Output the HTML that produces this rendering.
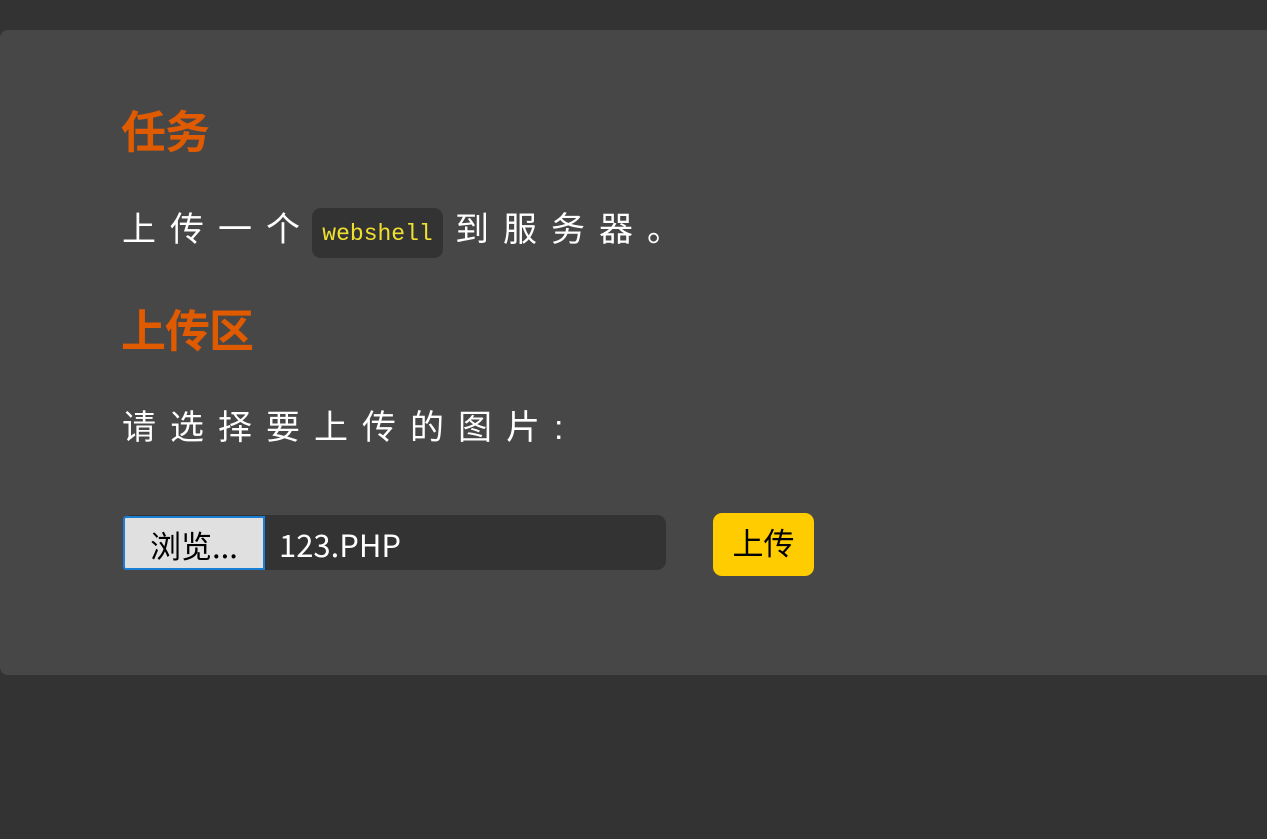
<!DOCTYPE html>
<html><head><meta charset="utf-8"><style>
body{margin:0;background:#333;width:1267px;height:839px;overflow:hidden;font-family:"Liberation Sans","Noto Sans CJK SC",sans-serif;}
.panel{position:absolute;left:0;top:30px;width:1275px;height:645px;background:#474747;border-radius:8px;}
.h{position:absolute;left:121px;color:#e05a00;font-weight:bold;font-size:45px;line-height:1;letter-spacing:-1px;}
.t{position:absolute;left:122px;color:#fff;font-size:34px;letter-spacing:14px;line-height:1;white-space:nowrap;}
.code{position:absolute;left:312px;top:208px;width:131px;height:50px;background:#333;border-radius:9px;color:#f0e030;font-family:"Liberation Mono",monospace;font-size:23px;line-height:52px;text-align:center;letter-spacing:0;}
.file{position:absolute;left:123px;top:515px;width:543px;height:55px;background:#333;border-radius:9px;}
.browse{position:absolute;left:123px;top:516px;width:138px;height:50px;background:#e0e0e0;border:2px solid #1a7fd4;border-radius:3px 0 0 3px;color:#000;font-size:31px;line-height:54px;text-align:center;font-family:"Noto Sans CJK SC",sans-serif;}
.fname{position:absolute;left:279px;top:515px;height:55px;line-height:58px;color:#fff;font-size:31px;font-family:"Noto Sans CJK SC",sans-serif;}
.up{position:absolute;left:713px;top:513px;width:101px;height:63px;background:#ffcc00;border-radius:9px;font-size:31px;line-height:63px;text-align:center;color:#000;}
</style></head><body>
<div class="panel"></div>
<div class="h" style="top:110px">任务</div>
<div class="t" style="top:213px">上传一个</div>
<div class="code">webshell</div>
<div class="t" style="left:455px;top:213px">到服务器。</div>
<div class="h" style="top:309px">上传区</div>
<div class="t" style="top:411px">请选择要上传的图片:</div>
<div class="file"></div>
<div class="browse">浏览...</div>
<div class="fname">123.PHP</div>
<div class="up">上传</div>
</body></html>
